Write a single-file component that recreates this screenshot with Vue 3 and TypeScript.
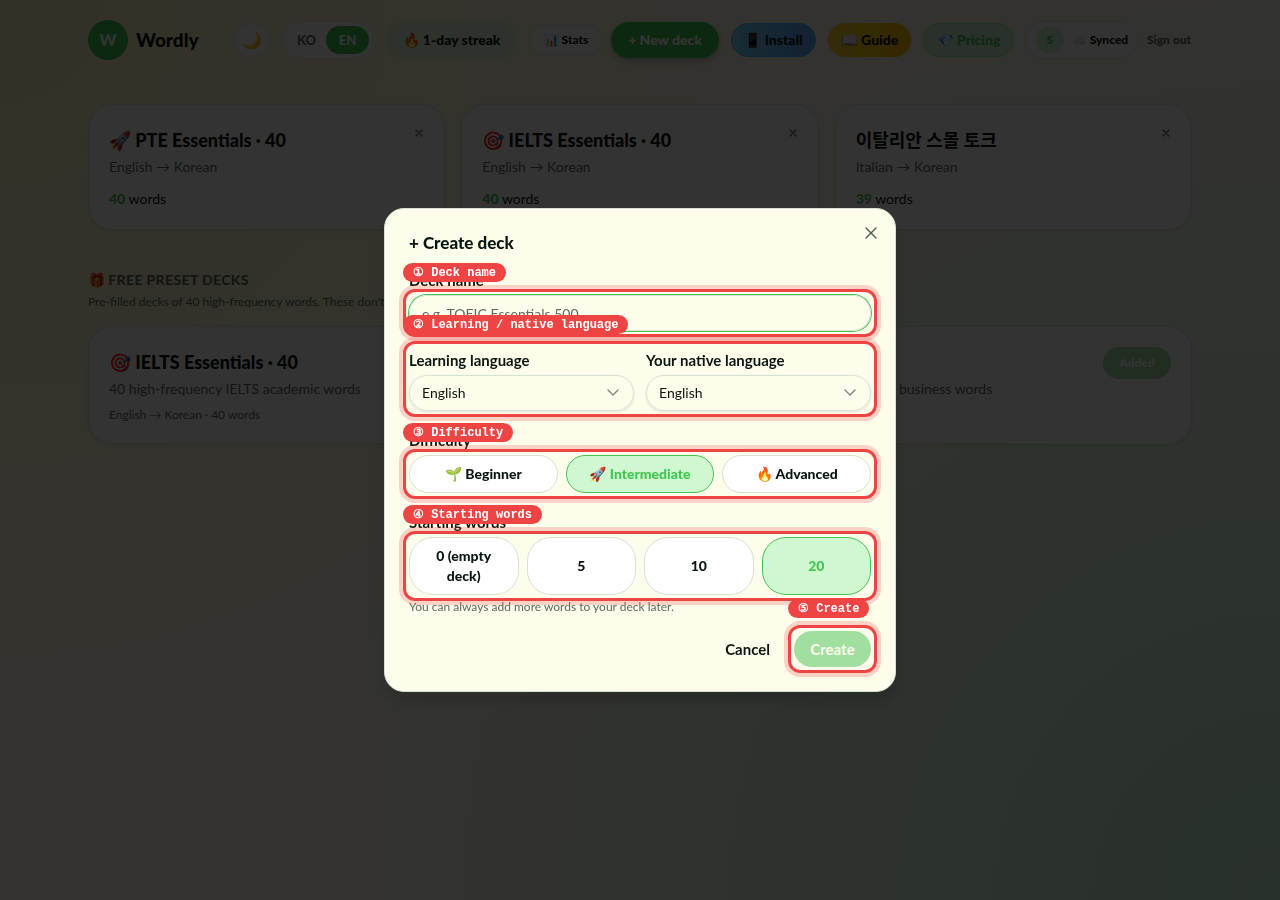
<script setup lang="ts">
import { ref } from 'vue'

interface Deck {
  title: string
  pair: string
  count: number
  lang: string
}

const decks: Deck[] = [
  { title: '🚀 PTE Essentials · 40', pair: 'English → Korean', count: 40, lang: 'en' },
  { title: '🎯 IELTS Essentials · 40', pair: 'English → Korean', count: 40, lang: 'en' },
  { title: '이탈리안 스몰 토크', pair: 'Italian → Korean', count: 39, lang: 'ko' },
]

const presets = [
  { title: '🎯 IELTS Essentials · 40', text: '40 high-frequency IELTS academic words', meta: 'English → Korean · 40 words' },
  { title: '💼 TOEIC Essentials · 40', text: '40 high-frequency TOEIC offices and business words', meta: 'English → Korean · 40 words' },
]

const levels = ['🌱 Beginner', '🚀 Intermediate', '🔥 Advanced']
const amounts = ['0 (empty deck)', '5', '10', '20']

const deckName = ref('')
const learning = ref('English')
const native = ref('English')
const level = ref('🚀 Intermediate')
const amount = ref('20')
</script>

<template>
  <div class="page">
    <div class="container">
      <header class="topbar">
        <a class="brand" href="#"><span class="logo">W</span><span>Wordly</span></a>
        <nav class="actions">
          <button class="pill moon" type="button" aria-label="Dark mode">🌙</button>
          <div class="pill lang">
            <button type="button">KO</button>
            <button type="button" class="on">EN</button>
          </div>
          <span class="pill streak">🔥 1-day streak</span>
          <div class="pair">
            <button class="pill stats" type="button">📊 Stats</button>
            <button class="pill new" type="button">+ New deck</button>
          </div>
          <button class="pill install" type="button">📱 Install</button>
          <a class="pill guide" href="#">📖 Guide</a>
          <a class="pill pricing" href="#">💎 Pricing</a>
          <div class="pair">
            <div class="pill account"><span class="avatar">S</span><span>☁️ Synced</span></div>
            <button class="signout" type="button">Sign out</button>
          </div>
        </nav>
      </header>

      <main>
        <section class="decks">
          <article v-for="d in decks" :key="d.title" class="card">
            <h2 :lang="d.lang">{{ d.title }}</h2>
            <p class="sub">{{ d.pair }}</p>
            <p class="words"><b>{{ d.count }}</b> words</p>
            <button class="remove" type="button" aria-label="Delete deck">
              <svg viewBox="0 0 8 8" width="8" height="8"><path d="M1 1l6 6M7 1L1 7" /></svg>
            </button>
          </article>
        </section>

        <section class="free">
          <h3>🎁 <span>FREE PRESET DECKS</span></h3>
          <p class="lead">Pre-filled decks of 40 high-frequency words. These don't count toward your limit.</p>
          <div class="presets">
            <article v-for="p in presets" :key="p.title" class="card preset">
              <div>
                <h2>{{ p.title }}</h2>
                <p class="sub">{{ p.text }}</p>
                <p class="meta">{{ p.meta }}</p>
              </div>
              <button class="added" type="button" disabled>Added</button>
            </article>
          </div>
        </section>
      </main>
    </div>

    <div class="overlay">
      <form class="modal" role="dialog" aria-labelledby="dialog-title" @submit.prevent>
        <h1 id="dialog-title">+ Create deck</h1>
        <button class="close" type="button" aria-label="Close">
          <svg viewBox="0 0 12 12" width="12" height="12"><path d="M1 1l10 10M11 1L1 11" /></svg>
        </button>

        <div class="field">
          <label for="deck-name">Deck name</label>
          <div class="target">
            <input id="deck-name" v-model="deckName" type="text" placeholder="e.g. TOEIC Essentials 500" />
            <div class="mark"><span>① Deck name</span></div>
          </div>
        </div>

        <div class="target languages">
          <div class="field">
            <label for="learning">Learning language</label>
            <div class="select">
              <select id="learning" v-model="learning">
                <option>English</option><option>Italian</option><option>Korean</option>
              </select>
              <svg viewBox="0 0 12 8" width="12" height="8"><path d="M1 1l5 5 5-5" /></svg>
            </div>
          </div>
          <div class="field">
            <label for="native">Your native language</label>
            <div class="select">
              <select id="native" v-model="native">
                <option>English</option><option>Italian</option><option>Korean</option>
              </select>
              <svg viewBox="0 0 12 8" width="12" height="8"><path d="M1 1l5 5 5-5" /></svg>
            </div>
          </div>
          <div class="mark"><span>② Learning / native language</span></div>
        </div>

        <div class="field">
          <p id="level-label" class="label">Difficulty</p>
          <div class="target options three" role="group" aria-labelledby="level-label">
            <button v-for="l in levels" :key="l" type="button" class="option" :class="{ on: l === level }" @click="level = l">{{ l }}</button>
            <div class="mark"><span>③ Difficulty</span></div>
          </div>
        </div>

        <div class="field last">
          <p id="amount-label" class="label">Starting words</p>
          <div class="target options four" role="group" aria-labelledby="amount-label">
            <button v-for="a in amounts" :key="a" type="button" class="option heavy" :class="{ on: a === amount }" @click="amount = a">{{ a }}</button>
            <div class="mark"><span>④ Starting words</span></div>
          </div>
          <p class="note">You can always add more words to your deck later.</p>
        </div>

        <footer>
          <button class="cancel" type="button">Cancel</button>
          <div class="target">
            <button class="create" type="submit" disabled>Create</button>
            <div class="mark"><span>⑤ Create</span></div>
          </div>
        </footer>
      </form>
    </div>
  </div>
</template>

<style>
body { margin: 0; background: #fefbea; }
</style>

<style scoped>
* { box-sizing: border-box; }
h1, h2, h3, p { margin: 0; }
button, input, select { font: inherit; color: inherit; margin: 0; border: 0; background: none; padding: 0; }
button { white-space: nowrap; }
a { color: inherit; text-decoration: none; }
svg { fill: none; stroke: currentColor; stroke-width: 1.4; stroke-linecap: round; stroke-linejoin: round; }

.page {
  min-height: 100vh;
  font-family: Lato, "Noto Sans CJK KR", sans-serif;
  font-size: 14px;
  line-height: 20px;
  color: #0a1710;
  background:
    radial-gradient(circle at 0 0, #fff3bf, transparent 50%),
    radial-gradient(circle at 100% 100%, #c8f5d2, transparent 60%),
    #fefbea;
}
.container { max-width: 1152px; margin: 0 auto; padding: 20px 24px; }
.topbar { display: flex; align-items: center; justify-content: space-between; height: 40px; margin-bottom: 44px; }
.brand { display: flex; align-items: center; gap: 8px; font-size: 19px; font-weight: 900; }
.logo {
  display: grid; place-items: center; width: 40px; height: 40px; border-radius: 50%;
  background: #44c553; color: #fff; font-size: 16px;
}
.actions { display: flex; align-items: center; gap: 12px; }
.pair { display: flex; align-items: center; gap: 8px; }
.pill {
  display: flex; align-items: center; justify-content: center; height: 36px;
  border-radius: 20px; font-weight: 900; white-space: nowrap;
}
.moon { width: 36px; background: #fff; border: 1px solid #e6eee6; font-size: 16px; }
.lang { width: 92px; height: 38px; padding: 4px; background: #fff; border: 1px solid #e6eee6; font-size: 13px; }
.lang button { flex: 1; height: 28px; border-radius: 14px; color: #5d6b63; font-weight: 900; }
.lang .on { flex: 0 0 43px; background: #44c553; color: #fff; }
.streak { width: 131px; background: #e2f8df; }
.stats { width: 74px; height: 30px; background: #fff; border: 1px solid #e0eae0; font-size: 12px; }
.new { width: 108px; background: #44c553; color: #fff; box-shadow: 0 3px 6px rgba(0, 0, 0, 0.25); }
.install { width: 85px; height: 34px; background: linear-gradient(90deg, #7dd3fc, #60a5fa); border: 1px solid #38bdf8; }
.guide { width: 83px; height: 34px; background: linear-gradient(90deg, #ffd633, #ffc400); }
.pricing { width: 91px; height: 34px; background: #cff6d2; border: 1px solid #a3e8ad; color: #44c553; }
.account { width: 112px; height: 38px; gap: 8px; background: #fff; border: 1px solid #e6eee6; font-size: 12px; }
.avatar { display: grid; place-items: center; width: 28px; height: 28px; border-radius: 50%; background: #cff6d2; color: #44c553; }
.signout { min-width: 46px; font-size: 12px; font-weight: 900; color: #5d6b63; }

.decks { display: grid; grid-template-columns: repeat(3, 1fr); gap: 16px; }
.card {
  position: relative; padding: 20px; background: #fff; border: 1px solid #e0eae0;
  border-radius: 24px; box-shadow: 0 1px 3px rgba(0, 0, 0, 0.1);
}
.card h2 { font-size: 18px; line-height: 30px; font-weight: 900; }
.card h2:lang(ko) { font-weight: 700; }
.sub { margin-top: 2px; color: #5d6b63; }
.words { margin-top: 12px; }
.words b { color: #44c553; font-weight: 900; }
.remove { position: absolute; top: 20px; right: 17px; display: grid; place-items: center; width: 16px; height: 16px; color: #5d6b63; }
.free { margin-top: 40px; }
.free h3 { font-size: 14px; font-weight: 900; color: #5d6b63; }
.free h3 span { letter-spacing: 0.025em; }
.lead, .meta { font-size: 12px; line-height: 16px; color: #5d6b63; }
.lead { margin-top: 4px; }
.presets { display: grid; grid-template-columns: repeat(2, 1fr); gap: 16px; margin-top: 16px; }
.preset { display: flex; justify-content: space-between; align-items: flex-start; }
.meta { margin-top: 8px; }
.added { width: 68px; height: 32px; border-radius: 16px; background: #a0dfa0; color: #fff; font-size: 12px; font-weight: 900; }

.overlay { position: fixed; inset: 0; display: grid; place-items: center; background: rgba(0, 0, 0, 0.8); }
.modal {
  position: relative; width: 100%; max-width: 512px; padding: 24px; background: #fefceb;
  border: 1px solid #d5e3d5; border-radius: 20px; box-shadow: 0 10px 16px rgba(0, 0, 0, 0.15);
}
.modal h1 { font-size: 17px; line-height: 20px; font-weight: 900; margin-bottom: 18px; }
.close { position: absolute; top: 16px; right: 16px; display: grid; place-items: center; width: 16px; height: 16px; color: #4e5b53; }
.field label, .label { display: block; margin-bottom: 6px; font-size: 15px; line-height: 18px; font-weight: 700; }
.field { margin-bottom: 20px; }
.target { position: relative; }
.modal input, .modal select {
  display: block; width: 100%; height: 36px; padding: 0 12px; border-radius: 18px;
  border: 1px solid #d5e3d5; background: transparent; box-shadow: 0 1px 3px rgba(0, 0, 0, 0.12);
}
.modal input { box-shadow: 0 0 0 1px #44c553; outline: 0; }
.modal input::placeholder { color: #5d6b63; opacity: 1; }
.modal select { appearance: none; }
.languages { display: grid; grid-template-columns: 1fr 1fr; gap: 12px; margin: -4px 0 20px; padding-top: 4px; }
.languages .field { margin: 0; }
.select { position: relative; }
.select svg { position: absolute; right: 15px; top: 14px; color: #7d8780; pointer-events: none; }
.options { display: grid; gap: 8px; }
.three { grid-template-columns: repeat(3, 1fr); }
.four { grid-template-columns: repeat(4, 1fr); }
.option {
  padding: 8px 12px; border: 1px solid #d5e3d5; border-radius: 24px; background: #fff;
  font-weight: 900; white-space: normal;
}
.heavy { min-height: 58px; }
.option.on { background: #cff8d0; border-color: #44c553; color: #44c553; }
.last { margin-bottom: 16px; }
.note { margin-top: 4px; font-size: 12px; line-height: 16px; color: #5d6b63; }
footer { display: flex; align-items: center; justify-content: flex-end; gap: 8px; }
.cancel { height: 36px; padding: 0 16px; font-size: 15px; font-weight: 700; }
.create { display: block; width: 77px; height: 36px; border-radius: 18px; background: #a0dfa0; color: #fdfced; font-size: 15px; font-weight: 700; }

.mark {
  position: absolute; inset: -6px; pointer-events: none; border: 3px solid #ef4444;
  border-radius: 12px; box-shadow: 0 0 0 4px rgba(239, 68, 68, 0.22);
}
.mark span {
  position: absolute; left: -3px; top: -29px; padding: 2px 10px 0; border-radius: 10px; background: #ef4444;
  color: #fff; font: bold 12px/17px "Liberation Mono", monospace; white-space: nowrap;
}
</style>
